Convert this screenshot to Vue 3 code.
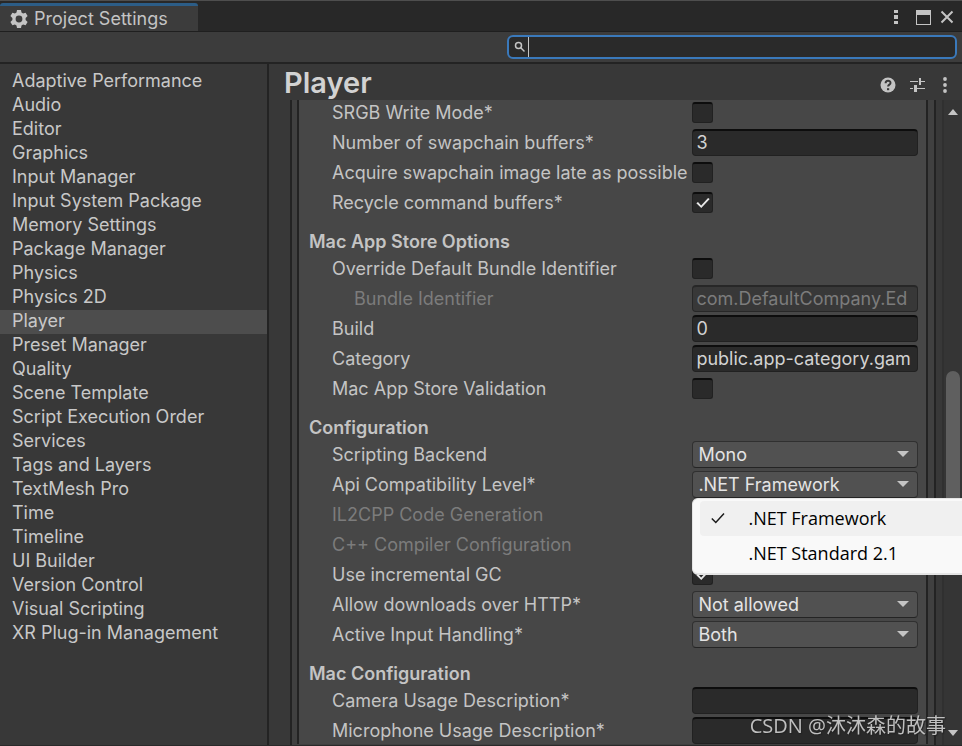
<template>
    <div class="window">
        <header class="titlebar">
            <div class="tab">
                <svg class="gear" viewBox="0 0 18 18">
                    <path fill-rule="evenodd" d="M7 0h4l.5 2.600 1.600.9L15.600 2.700l2 3.400-2 1.800v2.200l2 1.800-2 3.400-2.500-.8-1.600.9L11 18H7l-.5-2.600-1.600-.9-2.500.8-2-3.400 2-1.800V7.900l-2-1.800 2-3.400 2.500.8 1.600-.9zM9 5.600a3.400 3.400 0 1 0 0 6.800a3.400 3.400 0 1 0 0-6.800z" />
                </svg>
                <span>Project Settings</span>
            </div>
            <div class="win-btns">
                <button type="button" aria-label="Menu">
                    <svg width="4" height="16" viewBox="0 0 4 16"><path d="M0 1h4v3H0zM0 6h4v4H0zM0 12h4v3H0z" /></svg>
                </button>
                <button type="button" aria-label="Maximize">
                    <svg width="15" height="15" viewBox="0 0 15 15"><path fill-rule="evenodd" d="M0 0h15v15H0zM1 5v9h13V5z" /></svg>
                </button>
                <button type="button" aria-label="Close">
                    <svg width="14" height="14" viewBox="0 0 14 14"><path class="line" d="M1.500 1.500l11 11M12.500 1.500l-11 11" /></svg>
                </button>
            </div>
        </header>

        <div class="toolbar">
            <label class="search">
                <svg width="12" height="12" viewBox="0 0 12 12">
                    <circle class="thin" cx="4.500" cy="4.500" r="3" />
                    <path class="thin" d="M6.500 6.500l4 4" />
                </svg>
                <input type="text" v-model="keyword" aria-label="Search">
            </label>
        </div>

        <div class="main">
            <nav class="sidebar">
                <a v-for="item in shownPages" :key="item" href="#" :class="{ active: item === page }" @click.prevent="page = item">{{ item }}</a>
            </nav>

            <section class="content">
                <div class="head">
                    <h1>{{ page }}</h1>
                    <div class="head-btns">
                        <button type="button" aria-label="Help">
                            <svg width="16" height="16" viewBox="0 0 16 16">
                                <circle cx="8" cy="8" r="7.500" />
                                <path class="mark" d="M5.600 6.200c0-3.200 4.900-3.100 4.900-.3 0 1.800-2.400 1.700-2.400 3.700" />
                                <path class="dot" d="M7 11.200h2.200v2H7z" />
                            </svg>
                        </button>
                        <button type="button" aria-label="Presets">
                            <svg width="15" height="16" viewBox="0 0 15 16"><path d="M0 4h8v1H0zM9 1h2v7H9zM11 4h4v1h-4zM0 11h3v1H0zM4 8h3v7H4zM7 11h8v1H7z" /></svg>
                        </button>
                        <button type="button" aria-label="More">
                            <svg width="4" height="16" viewBox="0 0 4 16"><circle cx="2" cy="2" r="1.900" /><circle cx="2" cy="8" r="1.900" /><circle cx="2" cy="14" r="1.900" /></svg>
                        </button>
                    </div>
                </div>

                <div class="body">
                    <div class="outer">
                        <div class="inner">
                            <template v-for="(group, g) in groups" :key="g">
                                <h2 v-if="group.title">{{ group.title }}</h2>
                                <div class="rows">
                                    <div v-for="(row, i) in group.rows" :key="i" class="row" :class="{ disabled: row.disabled }">
                                        <label :for="`f${g}-${i}`" :class="{ sub: row.sub }">{{ row.label }}</label>
                                        <input v-if="row.type === 'check'" :id="`f${g}-${i}`" type="checkbox" v-model="row.value">
                                        <input v-else-if="row.type === 'text'" :id="`f${g}-${i}`" type="text" v-model="row.value" :disabled="row.disabled">
                                        <div v-else-if="row.type === 'select'" class="select">
                                            <select :id="`f${g}-${i}`" v-model="row.value" @mousedown="toggleMenu($event, row)">
                                                <option v-for="o in row.options" :key="o">{{ o }}</option>
                                            </select>
                                            <svg width="12" height="6" viewBox="0 0 12 6"><path d="M0 0h12L6 6z" /></svg>
                                            <div v-if="row.menu && menuOpen" class="menu">
                                                <button v-for="o in row.options" :key="o" type="button" :class="{ on: o === row.value }" @click="pick(row, o)">
                                                    <svg width="14" height="12" viewBox="0 0 14 12"><path v-if="o === row.value" d="M.8 6.500l4 4L13 1.500" /></svg>
                                                    <span>{{ o }}</span>
                                                </button>
                                            </div>
                                        </div>
                                    </div>
                                </div>
                            </template>
                        </div>
                    </div>
                    <div class="scrollbar">
                        <svg width="10" height="6" viewBox="0 0 10 6"><path d="M5 0l5 6H0z" /></svg>
                        <div class="track">
                            <div :style="{ height: scroll.top + '%' }"></div>
                            <div class="thumb" :style="{ height: scroll.size + '%' }"></div>
                        </div>
                        <svg width="10" height="6" viewBox="0 0 10 6"><path d="M0 0h10L5 6z" /></svg>
                    </div>
                </div>
            </section>
        </div>
        <div class="watermark">CSDN @沐沐森的故事</div>
    </div>
</template>

<script setup>
import { computed, ref } from 'vue'

const pages = [
    'Adaptive Performance', 'Audio', 'Editor', 'Graphics', 'Input Manager',
    'Input System Package', 'Memory Settings', 'Package Manager', 'Physics',
    'Physics 2D', 'Player', 'Preset Manager', 'Quality', 'Scene Template',
    'Script Execution Order', 'Services', 'Tags and Layers', 'TextMesh Pro',
    'Time', 'Timeline', 'UI Builder', 'Version Control', 'Visual Scripting',
    'XR Plug-in Management',
]

const page = ref('Player')
const keyword = ref('')
const menuOpen = ref(true)
const scroll = ref({ top: 41.6, size: 28 })

const shownPages = computed(() => pages.filter(p => p.toLowerCase().includes(keyword.value.toLowerCase())))

const groups = ref([
    {
        rows: [
            { label: 'SRGB Write Mode*', type: 'check', value: false },
            { label: 'Number of swapchain buffers*', type: 'text', value: '3' },
            { label: 'Acquire swapchain image late as possible', type: 'check', value: false },
            { label: 'Recycle command buffers*', type: 'check', value: true },
        ],
    },
    {
        title: 'Mac App Store Options',
        rows: [
            { label: 'Override Default Bundle Identifier', type: 'check', value: false },
            { label: 'Bundle Identifier', type: 'text', value: 'com.DefaultCompany.Ed', disabled: true, sub: true },
            { label: 'Build', type: 'text', value: '0' },
            { label: 'Category', type: 'text', value: 'public.app-category.gam' },
            { label: 'Mac App Store Validation', type: 'check', value: false },
        ],
    },
    {
        title: 'Configuration',
        rows: [
            { label: 'Scripting Backend', type: 'select', value: 'Mono', options: ['Mono', 'IL2CPP'] },
            { label: 'Api Compatibility Level*', type: 'select', value: '.NET Framework', options: ['.NET Framework', '.NET Standard 2.1'], menu: true },
            { label: 'IL2CPP Code Generation', disabled: true },
            { label: 'C++ Compiler Configuration', disabled: true },
            { label: 'Use incremental GC', type: 'check', value: true },
            { label: 'Allow downloads over HTTP*', type: 'select', value: 'Not allowed', options: ['Not allowed', 'Always allowed'] },
            { label: 'Active Input Handling*', type: 'select', value: 'Both', options: ['Both'] },
        ],
    },
    {
        title: 'Mac Configuration',
        rows: [
            { label: 'Camera Usage Description*', type: 'text', value: '' },
            { label: 'Microphone Usage Description*', type: 'text', value: '' },
        ],
    },
])

const toggleMenu = (e, row) => {
    if (!row.menu) return
    e.preventDefault()
    menuOpen.value = !menuOpen.value
}

const pick = (row, option) => {
    row.value = option
    menuOpen.value = false
}
</script>

<style>
body {
    background: #383838;
    overflow: hidden;
}
</style>

<style scoped>
* {
    box-sizing: border-box;
}

.window {
    display: flex;
    flex-direction: column;
    height: 100vh;
    border-top: 1px solid #4e4e4e;
    border-bottom: 1px solid #2a2a2a;
    background: #383838;
    color: #c4c4c4;
    font: 18px/24px Inter, "Noto Sans CJK SC", sans-serif;
}

svg {
    display: block;
    flex: none;
    fill: #c4c4c4;
}

.line,
.thin {
    fill: none;
    stroke: #c4c4c4;
    stroke-width: 2;
}

.thin {
    stroke-width: 1.5;
}

button {
    display: flex;
    align-items: center;
    padding: 0;
    border: 0;
    background: none;
    font: inherit;
}

/* 标题栏 */
.titlebar {
    display: flex;
    justify-content: space-between;
    height: 31px;
    padding-top: 2px;
    background: #282828;
    border-bottom: 1px solid #1f1f1f;
}

.tab {
    display: flex;
    align-items: center;
    gap: 6px;
    padding: 0 30px 0 10px;
    background: #3c3c3c;
    border-top: 3px solid #2c5d87;
    border-radius: 3px 3px 0 0;
}

.gear {
    width: 18px;
    height: 18px;
}

.win-btns {
    display: flex;
    align-items: center;
    padding-right: 8px;
}

.win-btns button:nth-child(2) {
    margin: 0 9px 0 18px;
}

/* 搜索栏 */
.toolbar {
    display: flex;
    justify-content: flex-end;
    align-items: center;
    height: 32px;
    padding-right: 5px;
    background: #3c3c3c;
    border-bottom: 2px solid #232323;
}

.search {
    display: flex;
    align-items: center;
    gap: 2px;
    width: 47%;
    height: 24px;
    padding-left: 5px;
    background: #2a2a2a;
    border: 2px solid #3a79bb;
    border-radius: 6px;
}

.search input {
    flex: 1;
    min-width: 0;
    height: 20px;
    border: 0;
    border-left: 1px solid #c4c4c4;
    outline: none;
    background: none;
    color: #d2d2d2;
    font: inherit;
}

.main {
    display: flex;
    flex: 1;
    min-height: 0;
}

.sidebar {
    flex: none;
    width: 269px;
    padding-top: 6px;
    border-right: 2px solid #232323;
}

.sidebar a {
    display: block;
    height: 24px;
    padding-left: 12px;
    color: #c8c8c8;
    line-height: 22px;
    text-decoration: none;
    white-space: nowrap;
}

.sidebar .active {
    background: #4d4d4d;
}

.content {
    display: flex;
    flex: 1;
    flex-direction: column;
    min-width: 0;
}

.head {
    display: flex;
    flex: none;
    justify-content: space-between;
    height: 36px;
    padding: 0 15px;
}

h1 {
    margin: 0;
    color: #d2d2d2;
    font-size: 29px;
    font-weight: 600;
    line-height: 38px;
}

.head-btns {
    display: flex;
    gap: 14px;
    padding-top: 6px;
}

.head-btns button:last-child {
    margin-left: 4px;
}

.mark {
    fill: none;
    stroke: #383838;
    stroke-width: 2;
}

.dot {
    fill: #383838;
}

.body {
    display: flex;
    flex: 1;
    min-height: 0;
}

.outer {
    flex: 1;
    min-width: 0;
    margin: 0 6px 0 21px;
    padding: 0 6px 0 5px;
    overflow: hidden;
    background: #404040;
    border: solid #232323;
    border-width: 0 2px;
}

.inner {
    padding: 0 8px 0 10px;
    background: #474747;
    border: solid #232323;
    border-width: 0 2px;
}

h2 {
    margin: 13px 0 0;
    font-size: 18px;
    font-weight: 600;
    line-height: 26px;
}

.rows {
    display: grid;
    gap: 3px;
}

/* 内容已滚动, 第一组被标题遮住一点 */
.rows:first-child {
    margin-top: -1px;
}

.row {
    display: grid;
    grid-template-columns: 17fr 10fr;
    align-items: center;
    height: 27px;
}

.row label {
    margin-right: 2px;
    padding-left: 23px;
    overflow: hidden;
    white-space: nowrap;
}

.row .sub {
    padding-left: 45px;
}

.disabled label {
    color: #7c7c7c;
}

.row input {
    margin: 0;
    background: #2a2a2a;
    border: 1px solid #212121;
    border-top: 2px solid #0d0d0d;
    border-radius: 4px;
    color: #d2d2d2;
    font: inherit;
}

.row input[type="text"] {
    width: 100%;
    height: 27px;
    padding: 0 4px 1px 3px;
}

.row input:disabled {
    background: #383838;
    border-color: #272727;
    color: #7c7c7c;
}

.row input[type="checkbox"] {
    display: grid;
    place-items: center;
    appearance: none;
    width: 21px;
    height: 21px;
    border-radius: 3px;
}

.row input:checked::before {
    width: 15px;
    height: 12px;
    background: #e8e8e8;
    clip-path: polygon(6% 52%, 17% 42%, 38% 70%, 84% 8%, 95% 17%, 39% 92%);
    content: "";
}

.select {
    position: relative;
}

.select select {
    display: block;
    appearance: none;
    width: 100%;
    height: 27px;
    padding: 1px 24px 0 5px;
    background: #515151;
    border: 1px solid #303030;
    border-bottom-color: #242424;
    border-radius: 4px;
    color: #e4e4e4;
    font: inherit;
}

.select > svg {
    position: absolute;
    top: 10px;
    right: 9px;
    pointer-events: none;
}

/* fixed 让菜单不被滚动区域裁掉 */
.menu {
    position: fixed;
    z-index: 2;
    width: 300px;
    padding: 2px 0 2px 7px;
    background: #f9f9f9;
    border: 1px solid #e5e5e5;
    border-width: 1px 1px 2px;
    border-radius: 6px;
    font: 18px/32px "Open Sans", sans-serif;
}

.menu button {
    gap: 23px;
    width: 100%;
    height: 35px;
    padding: 0 0 2px 11px;
    border-radius: 4px;
    color: #000;
}

.menu .on {
    background: #f0f0f0;
}

.menu svg {
    fill: none;
    stroke: #1a1a1a;
    stroke-width: 1.5;
}

.scrollbar {
    display: flex;
    flex-direction: column;
    align-items: center;
    width: 20px;
    padding: 9px 0;
    background: #353535;
    border-left: 2px solid #303030;
}

.track {
    flex: 1;
    min-height: 0;
}

.thumb {
    width: 14px;
    background: #5f5f5f;
    border-radius: 7px;
}

.watermark {
    position: fixed;
    right: 16px;
    bottom: 6px;
    z-index: 3;
    color: #c0c0c0;
    font: 20px/28px "Open Sans", "Noto Sans CJK SC", sans-serif;
    text-shadow: 1px 1px 1px #222;
}
</style>
